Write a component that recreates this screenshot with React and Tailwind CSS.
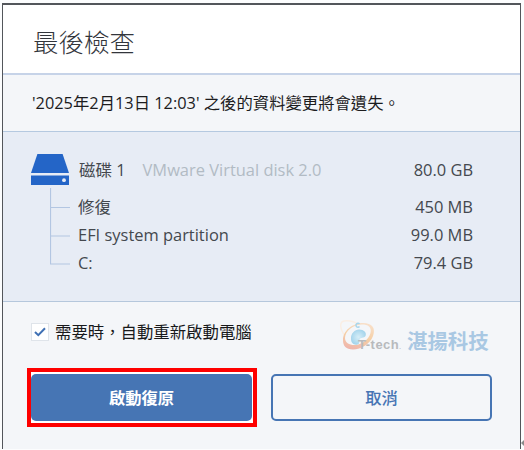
import React, { useState } from "react";

const disk = {
  name: "磁碟 1",
  model: "VMware Virtual disk 2.0",
  size: "80.0 GB",
};

const partitions = [
  { name: "修復", size: "450 MB" },
  { name: "EFI system partition", size: "99.0 MB" },
  { name: "C:", size: "79.4 GB" },
];

const DiskIcon = () => (
  <svg width="38" height="31" viewBox="0 0 38 31" className="shrink-0">
    <path d="M6.4 0H31.6L38 19H0Z" fill="#2465c7" />
    <path d="M0 21.6H38V31H0Z" fill="#2465c7" />
    <circle cx="33" cy="26.2" r="1.9" fill="#e7ecf5" />
  </svg>
);

const TreeLines = () => (
  <svg width="20" height="77" viewBox="0 0 20 77" className="shrink-0">
    <path d="M0.5 0V76.5M0 19.5H20M0 48H20M0 76H20" fill="none" stroke="#b3c6e2" strokeWidth="1.2" />
  </svg>
);

const Logo = () => (
  <div className="relative h-[34px] w-[152px]">
    <svg width="36" height="34" viewBox="0 0 36 34" className="absolute left-0 top-0">
      <defs>
        <linearGradient id="ring" x1="0.6" y1="0" x2="0.3" y2="1">
          <stop offset="0" stopColor="#f8dfc8" />
          <stop offset="0.5" stopColor="#f5cfa6" />
          <stop offset="1" stopColor="#efb5ac" />
        </linearGradient>
        <radialGradient id="drop">
          <stop offset="0" stopColor="#d6eef8" />
          <stop offset="1" stopColor="#a6d5ec" />
        </radialGradient>
      </defs>
      <path d="M5 16C0 9-1 2 4 1C9 0 15 2 20 5" fill="none" stroke="#faeee4" strokeWidth="1.4" />
      <path
        fillRule="evenodd"
        d="M3 20C3 11 12 3 23 3C32 3 36 8 33 16C30 24 21 29.500 13 29.500C6 29.500 3 26 3 20ZM5 18C5 22.500 9 25 14.500 25C22 25 29 19 30.500 13C32 7 28 4.500 22 4.500C13 4.500 5 11 5 18Z"
        fill="url(#ring)"
      />
      <path
        d="M11 19C10.500 13.500 15 9.500 19 9.500C24 9.500 27 12.500 25.500 16C24 18.500 20.500 17 19.500 19.500C18.500 22 20.500 23 17.500 24.500C13.500 25.500 11 22.500 11 19Z"
        fill="url(#drop)"
      />
      <path d="M19.500 4A2 2 0 1 0 19.500 6.600" fill="none" stroke="#a8d6ec" strokeWidth="1.500" />
    </svg>
    <span className="absolute left-[18px] top-[17px] whitespace-nowrap font-['Liberation_Sans',sans-serif] text-[13px] font-bold leading-[16px] tracking-[0.5px] text-[#b8babd]">
      T-tech<span className="text-[6px]">.</span>
    </span>
    <span className="absolute left-[67px] top-[9px] whitespace-nowrap text-[20.4px] font-bold leading-6 text-[#a9c8e3]">
      湛揚科技
    </span>
  </div>
);

const App = () => {
  const [autoRestart, setAutoRestart] = useState(true);

  return (
    <div className="relative h-[450px] w-[524px] overflow-hidden bg-[#fcfdfe] pl-[2px] pt-[3px] font-['Open_Sans','Noto_Sans_CJK_TC',sans-serif] text-[16.45px] text-[#44484e]">
      <div className="flex h-[446px] w-[519px] flex-col border-x border-t-2 border-[#53565b] bg-[#f4f6f9]">
        {/* Title */}
        <header className="flex h-[70px] shrink-0 items-center border-b-2 border-[#c6d3e8] bg-white pl-[30px] pt-[5px]">
          <h1 className="text-[25.5px] font-light leading-8 text-[#33363c]">最後檢查</h1>
        </header>

        {/* Warning */}
        <div className="flex h-[57px] shrink-0 items-center border-b border-[#b5c9e0] pl-[29px]">
          <p className="whitespace-nowrap text-[16.35px] leading-6 text-[#1c1c1e]">
            '2025年2月13日 12:03' 之後的資料變更將會遺失。
          </p>
        </div>

        {/* Disk and its partitions */}
        <section className="h-[170px] shrink-0 border-b border-[#b5c7dc] bg-[#e7ecf5] pl-7 pr-[47px] pt-[22px]">
          <div className="flex h-[31px] items-center">
            <DiskIcon />
            <span className="ml-[10px] pt-px">{disk.name}</span>
            <span className="ml-[17px] pt-px text-[#b2bbc4]">{disk.model}</span>
            <span className="ml-auto pt-px">{disk.size}</span>
          </div>
          <div className="flex pl-[19px] pt-[3px]">
            <TreeLines />
            <ul className="ml-2 flex-1 pt-[5px]">
              {partitions.map((part) => (
                <li key={part.name} className="flex h-[28px] items-center justify-between">
                  <span>{part.name}</span>
                  <span>{part.size}</span>
                </li>
              ))}
            </ul>
          </div>
        </section>

        {/* Options and actions */}
        <footer className="flex-1 pt-[18px]">
          <div className="flex h-[38px] items-start justify-between pl-7 pr-[28px]">
            <button
              onClick={() => setAutoRestart(!autoRestart)}
              className="mt-[3px] flex h-[18px] items-center gap-[6px] whitespace-nowrap text-[16.4px] text-[#18191b]"
            >
              <span className="flex size-[18px] items-center justify-center border border-[#dfe4ea] bg-white">
                {autoRestart && (
                  <svg width="12" height="10" viewBox="0 0 12 10">
                    <path d="M1 5L4.300 8.200L11 1.200" fill="none" stroke="#3f70b4" strokeWidth="2" />
                  </svg>
                )}
              </span>
              需要時，自動重新啟動電腦
            </button>
            <Logo />
          </div>
          <div className="flex items-center gap-[14px] pl-6 pt-[10px]">
            <div className="flex h-[59px] w-[230px] items-center border-4 border-[#fe0000] bg-white">
              <button className="h-[47px] w-[221px] rounded-[5px] bg-[#4675b4] pt-[2px] text-[16.3px] font-bold text-white">
                啟動復原
              </button>
            </div>
            <button className="h-[47px] w-[221px] rounded-[5px] border-2 border-[#4675b4] pt-[2px] text-[16.3px] font-medium text-[#4675b4]">
              取消
            </button>
          </div>
        </footer>
      </div>
      <svg width="3" height="6" viewBox="0 0 3 6" className="absolute left-[521px] top-[440px]">
        <path d="M3 0V6L0 3Z" fill="#8a8a8a" />
      </svg>
    </div>
  );
};

export default App;
